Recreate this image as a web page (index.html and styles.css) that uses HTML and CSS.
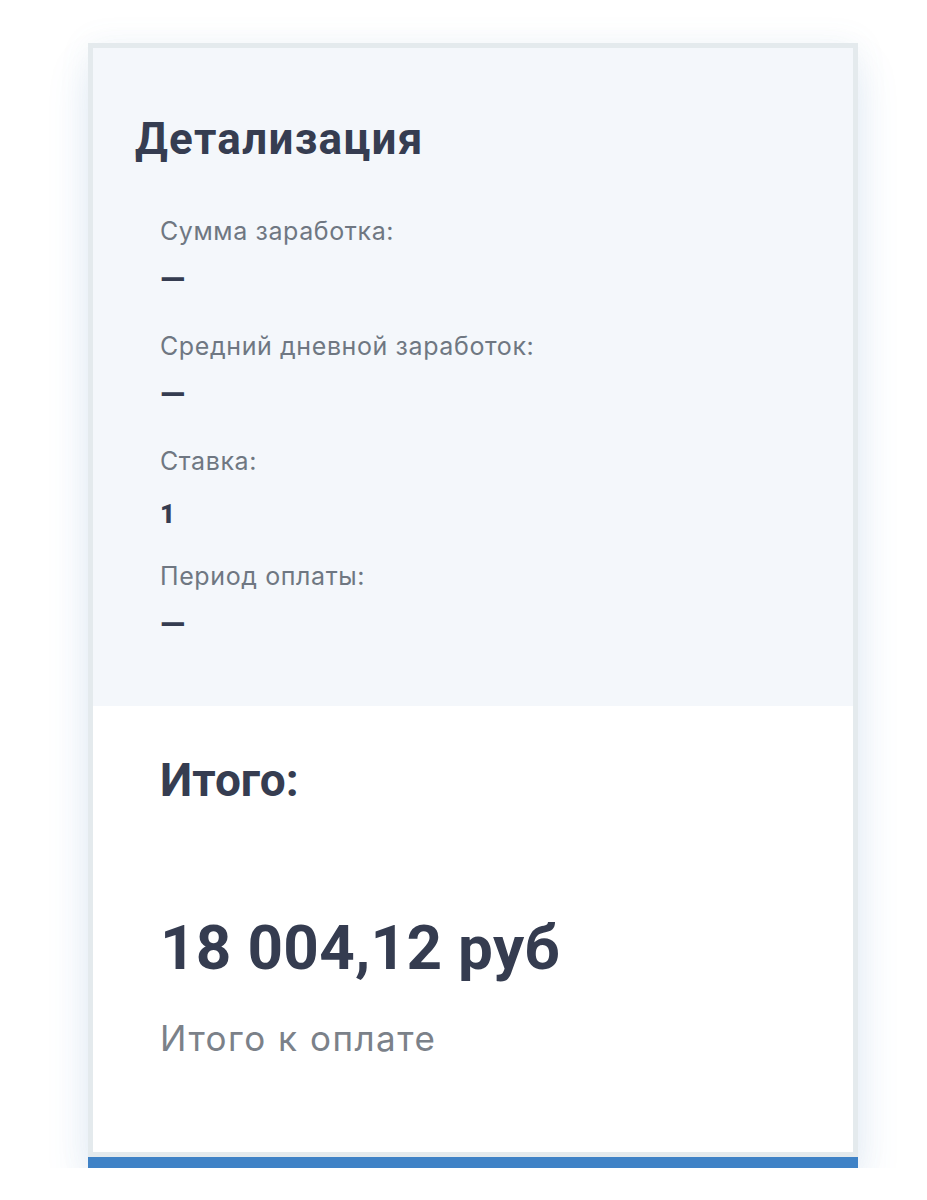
FILE: index.html
```html
<!DOCTYPE html>
<html lang="ru">
<head>
<meta charset="utf-8">
<title>Детализация</title>
<link rel="stylesheet" href="styles.css">
</head>
<body>
  <div class="card">
    <div class="card-body">
      <section class="details">
        <h2 class="details-title">Детализация</h2>
        <dl class="details-list">
          <div class="row">
            <dt class="row-label">Сумма заработка:</dt>
            <dd class="row-value row-value--empty">—</dd>
          </div>
          <div class="row">
            <dt class="row-label">Средний дневной заработок:</dt>
            <dd class="row-value row-value--empty">—</dd>
          </div>
          <div class="row">
            <dt class="row-label">Ставка:</dt>
            <dd class="row-value">1</dd>
          </div>
          <div class="row">
            <dt class="row-label">Период оплаты:</dt>
            <dd class="row-value row-value--empty">—</dd>
          </div>
        </dl>
      </section>
      <section class="total">
        <h3 class="total-title">Итого:</h3>
        <div class="total-amount">18 004,12 руб</div>
        <div class="total-caption">Итого к оплате</div>
      </section>
    </div>
    <div class="card-bar"></div>
  </div>
</body>
</html>
```

FILE: styles.css
```css
* {
  box-sizing: border-box;
}

body {
  margin: 0;
  background: #ffffff;
  font-family: Roboto, "Noto Sans", "Liberation Sans", sans-serif;
  color: #353c50;
}

.card {
  width: 770px;
  margin: 43px 0 0 88px;
  box-shadow: 0 24px 40px rgba(70, 130, 200, 0.14), 0 0 30px rgba(120, 150, 180, 0.08);
}

.card-body {
  border: 5px solid #e4eaed;
}

.details {
  background: #f4f7fb;
  padding: 66px 42px 62px;
}

.details-title {
  margin: 0;
  font-size: 44px;
  line-height: 50px;
  font-weight: 700;
  letter-spacing: 1.3px;
  color: #363d51;
}

.details-list {
  margin: 53px 0 0;
  padding-left: 25px;
  display: flex;
  flex-direction: column;
  gap: 33px;
}

.row {
  display: flex;
  flex-direction: column;
  gap: 24px;
}

.row-label {
  font-family: Inter, Roboto, "Noto Sans", sans-serif;
  font-size: 25px;
  line-height: 28px;
  letter-spacing: 0.6px;
  color: #6f7782;
}

.row-value {
  margin: 0;
  height: 30px;
  font-size: 26px;
  line-height: 30px;
  font-weight: 900;
  color: #353c50;
}

/* the dash placeholder is drawn a bit larger and higher than digits */
.row-value--empty {
  font-size: 33px;
  font-weight: 700;
  line-height: 22px;
}

.total {
  background: #ffffff;
  padding: 47px 67px 93px;
}

.total-title {
  margin: 0;
  font-size: 46px;
  line-height: 54px;
  font-weight: 700;
  color: #363d51;
}

.total-amount {
  margin-top: 103px;
  font-size: 62px;
  line-height: 76px;
  font-weight: 700;
  letter-spacing: 0.3px;
  color: #353c50;
}

.total-caption {
  margin-top: 31px;
  font-family: Inter, Roboto, "Noto Sans", sans-serif;
  font-size: 35px;
  line-height: 42px;
  letter-spacing: 1.5px;
  color: #7b8189;
}

.card-bar {
  height: 11px;
  background: #3f82c6;
}
```
